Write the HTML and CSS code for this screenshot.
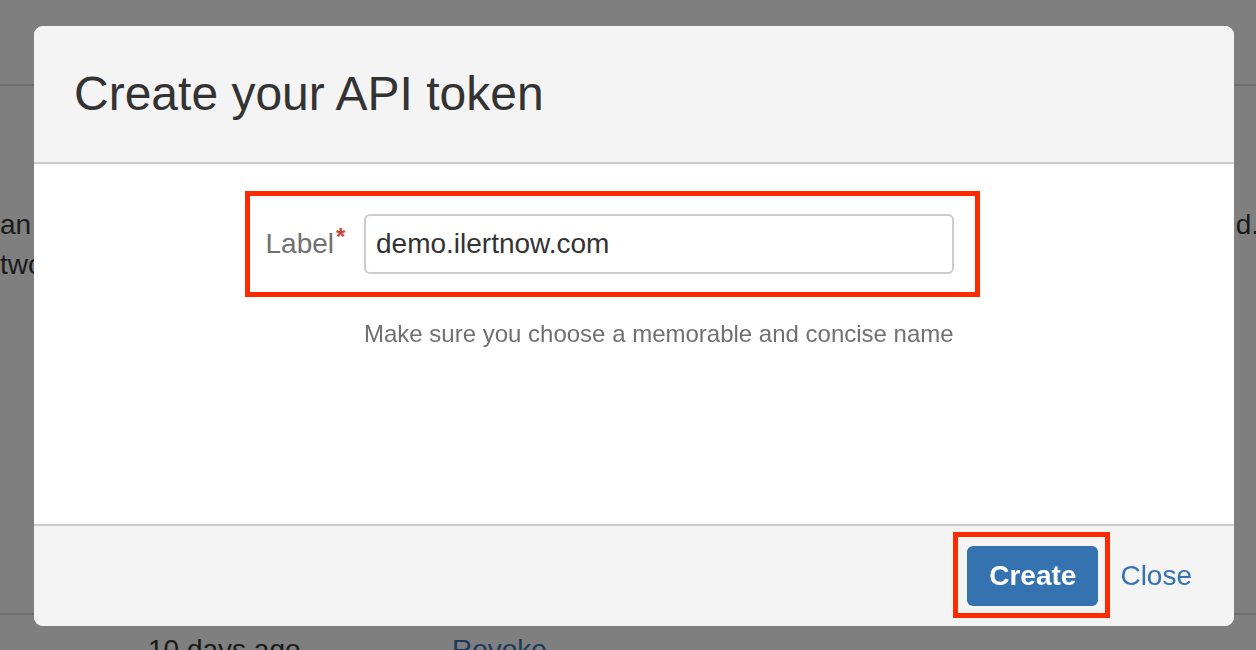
FILE: index.html
```html
<!DOCTYPE html>
<html lang="en">
<head>
<meta charset="utf-8">
<title>Create your API token</title>
<link rel="stylesheet" href="styles.css">
</head>
<body>
<div class="page">
  <div class="topbar"></div>
  <div class="intro">
    <div class="intro-line"><span>an</span><span>d.</span></div>
    <div class="intro-line"><span>two</span></div>
  </div>
  <div class="token-row">
    <span class="cell-date">10 days ago</span>
    <span class="cell-action">Revoke</span>
  </div>
</div>

<div class="dialog" role="dialog">
  <header class="dialog-header">
    <h2 class="dialog-title">Create your API token</h2>
  </header>
  <div class="dialog-content">
    <form class="token-form">
      <div class="field-group">
        <label class="field-label" for="label"><span class="label-text">Label<span class="required">*</span></span></label>
        <div class="field-body">
          <input id="label" class="text-input" type="text" value="demo.ilertnow.com">
          <div class="description">Make sure you choose a memorable and concise name</div>
        </div>
      </div>
    </form>
  </div>
  <footer class="dialog-footer">
    <button class="btn-primary" type="button">Create</button>
    <a class="link-close" href="#">Close</a>
  </footer>
</div>

<div class="annotation annotation-field"></div>
<div class="annotation annotation-button"></div>
</body>
</html>
```

FILE: styles.css
```css
* { box-sizing: border-box; }

html, body {
  margin: 0;
  padding: 0;
  width: 1256px;
  height: 650px;
  overflow: hidden;
}

body {
  background: #7f7f7f;
  font-family: "Liberation Sans", Arial, Helvetica, sans-serif;
  font-size: 28px;
  color: #1a1a1a;
}

/* dimmed page behind the dialog */
.topbar {
  height: 86px;
  border-bottom: 2px solid #6f6f6f;
}

.intro {
  margin-top: 119px;
  line-height: 40px;
}

.intro-line {
  display: flex;
  justify-content: space-between;
  margin-right: -3px;
}

.token-row {
  margin-top: 328px;
  border-top: 2px solid #6f6f6f;
  padding: 15px 0 0 148px;
  line-height: 40px;
  display: flex;
  white-space: nowrap;
}

.cell-date { width: 304px; }
.cell-action { color: #1b3a58; }

/* dialog */
.dialog {
  position: fixed;
  left: 34px;
  top: 26px;
  width: 1200px;
  height: 600px;
  background: #ffffff;
  border-radius: 9px;
  overflow: hidden;
  display: flex;
  flex-direction: column;
}

.dialog-header {
  height: 138px;
  flex: none;
  background: #f4f4f4;
  border-bottom: 2px solid #cccccc;
  padding: 0 40px;
  display: flex;
  align-items: center;
}

.dialog-title {
  margin: 0;
  font-size: 48px;
  font-weight: normal;
  line-height: 60px;
  color: #333333;
}

.dialog-content {
  flex: 1;
  padding: 50px 40px 40px;
}

.field-group {
  display: flex;
  gap: 30px;
}

.field-label {
  width: 260px;
  flex: none;
  text-align: right;
  line-height: 60px;
  color: #707070;
}

.label-text {
  position: relative;
}

.required {
  position: absolute;
  left: 100%;
  top: -3px;
  margin-left: 2px;
  font-size: 24px;
  font-weight: bold;
  line-height: 1;
  color: #d04437;
}

.field-body {
  display: flex;
  flex-direction: column;
}

.text-input {
  width: 590px;
  height: 60px;
  border: 2px solid #cccccc;
  border-radius: 6px;
  padding: 0 10px;
  font-family: inherit;
  font-size: 28px;
  color: #333333;
  background: #ffffff;
  outline: none;
}

.description {
  margin-top: 45px;
  font-size: 24px;
  line-height: 30px;
  color: #707070;
}

.dialog-footer {
  height: 102px;
  flex: none;
  background: #f4f4f4;
  border-top: 2px solid #cccccc;
  padding: 0 42px 0 40px;
  display: flex;
  justify-content: flex-end;
  align-items: center;
  gap: 22px;
}

.btn-primary {
  height: 60px;
  padding: 0 22px;
  border: none;
  border-radius: 6px;
  background: #3572b0;
  color: #ffffff;
  font-family: inherit;
  font-size: 28px;
  font-weight: bold;
  line-height: 60px;
}

.link-close {
  color: #3572b0;
  text-decoration: none;
  font-size: 28px;
}

/* red annotation frames drawn over the screenshot */
.annotation {
  position: fixed;
  border: 5px solid #fe2a00;
}

.annotation-field {
  left: 245px;
  top: 191px;
  width: 735px;
  height: 106px;
}

.annotation-button {
  left: 953px;
  top: 532px;
  width: 157px;
  height: 86px;
}
```
